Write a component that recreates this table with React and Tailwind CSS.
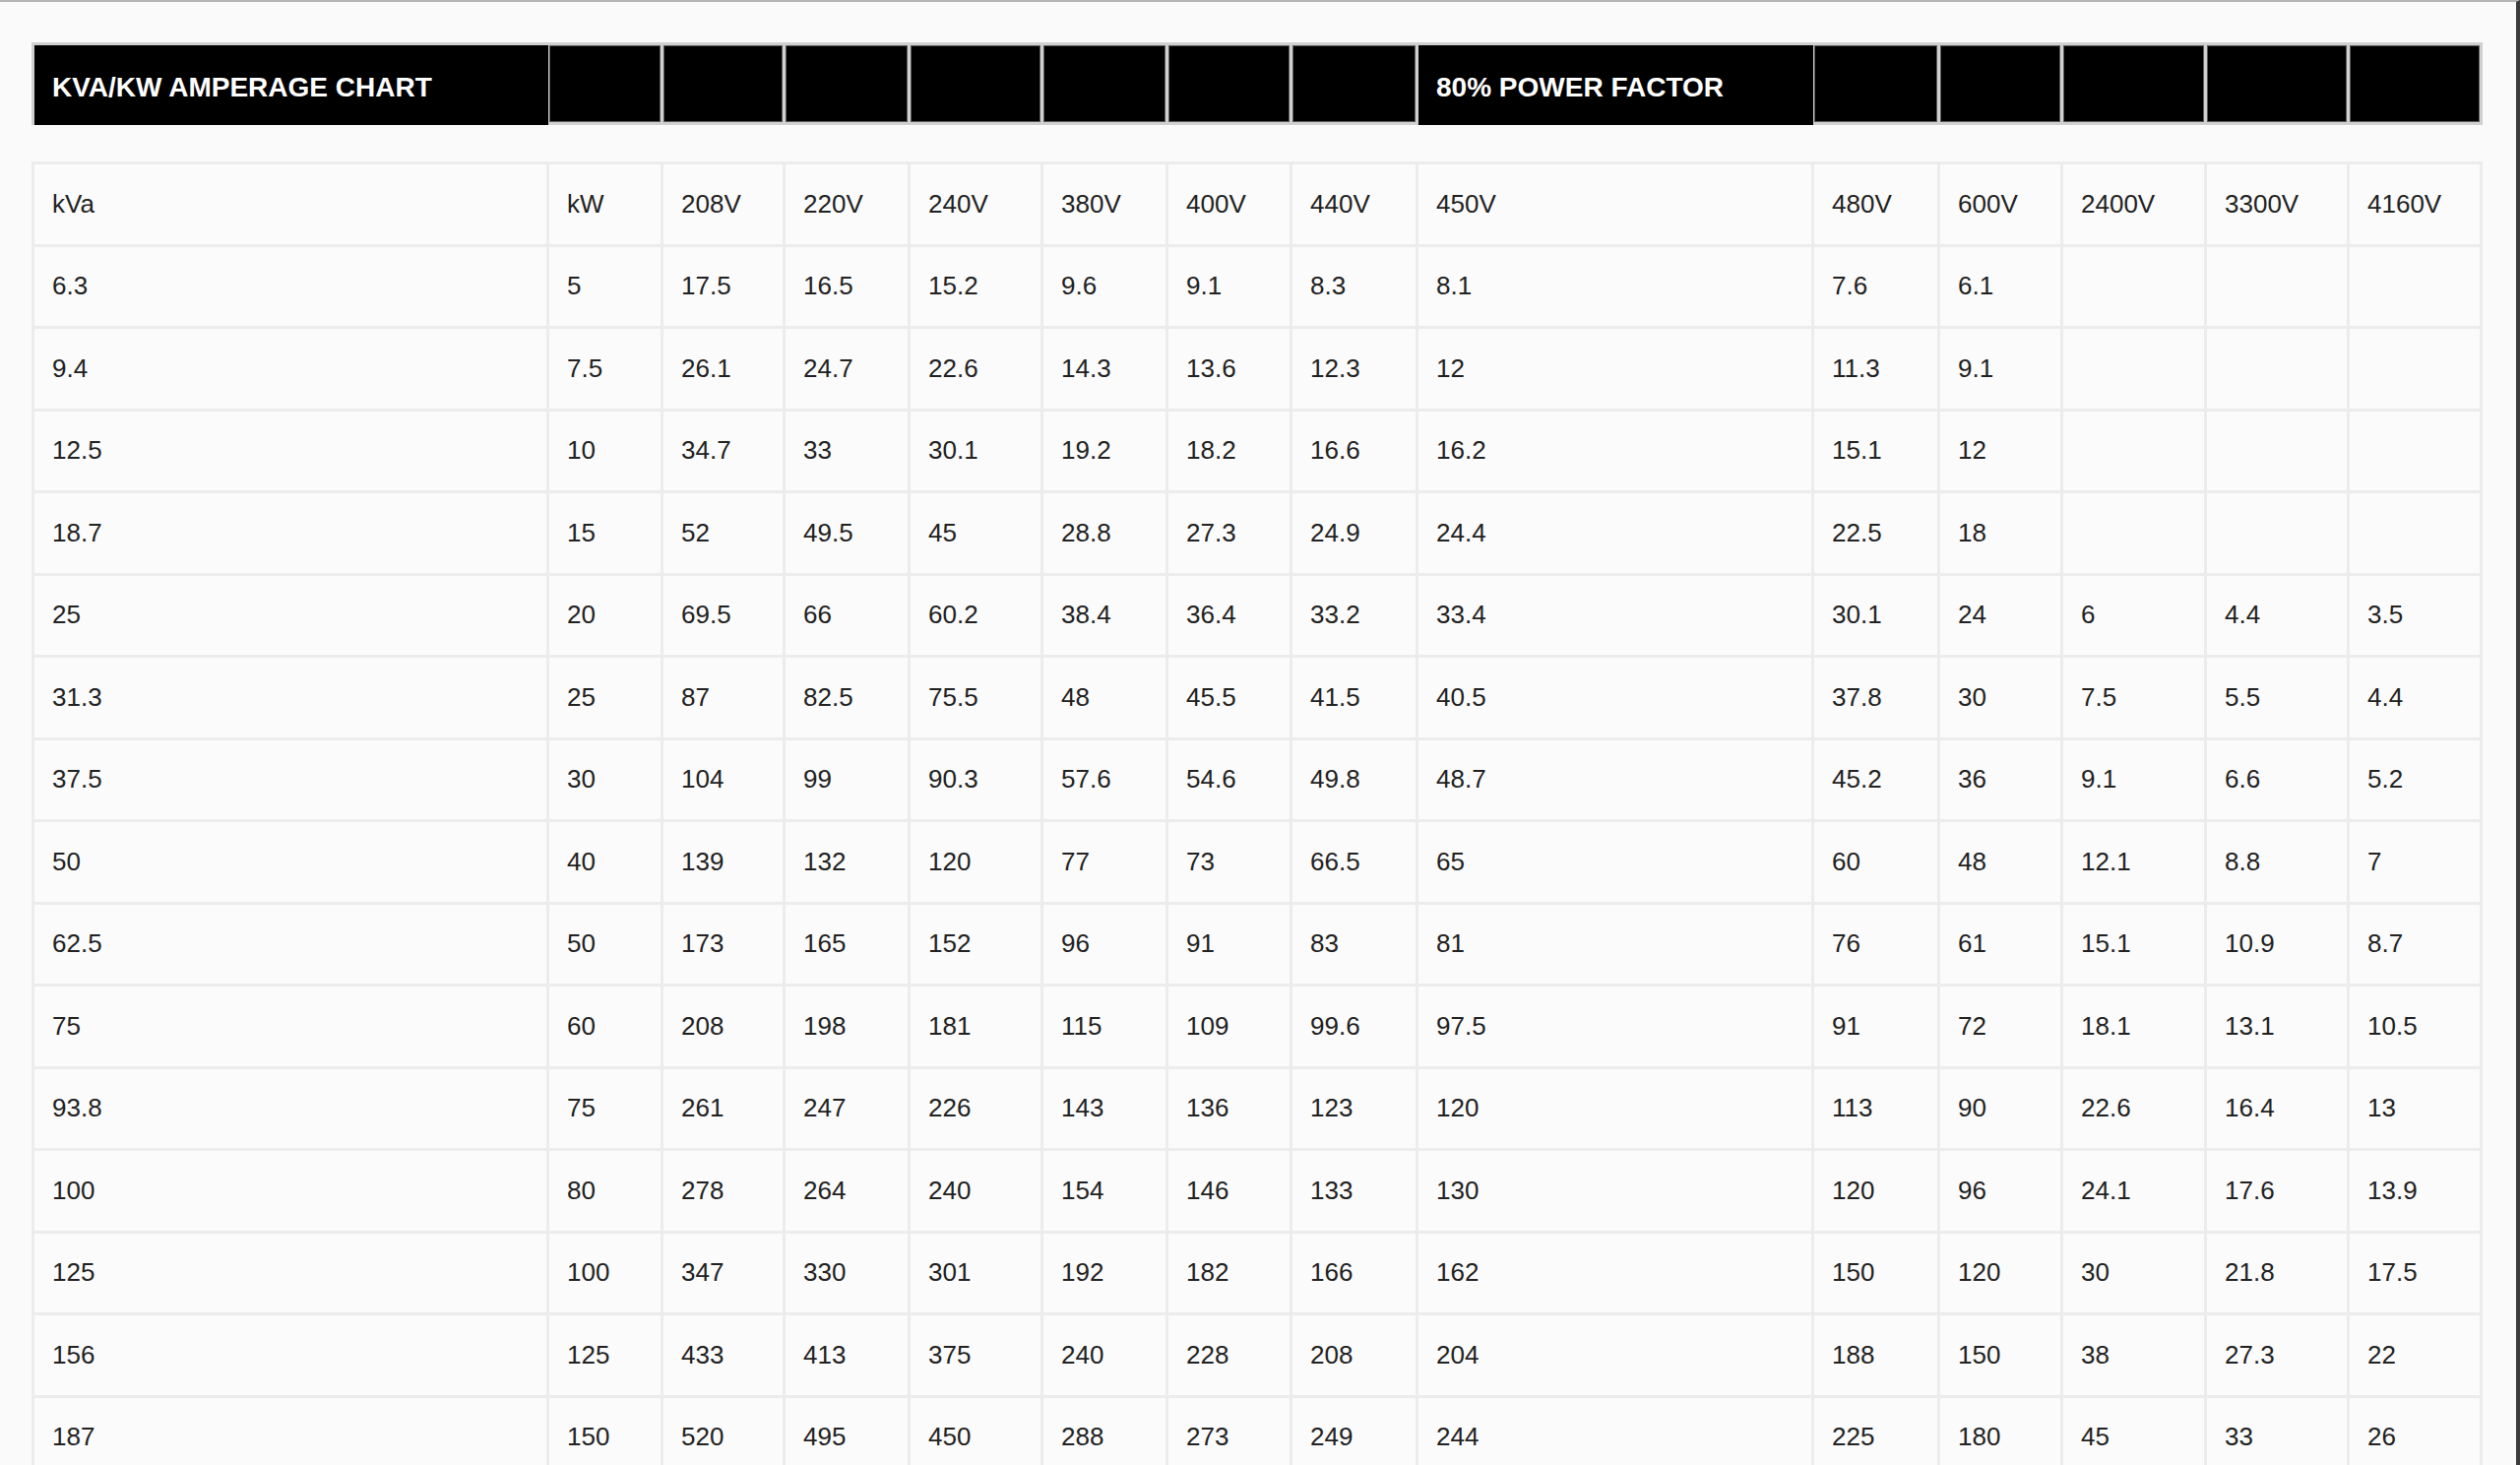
import React from "react";

const HEAD = ["kVa", "kW", "208V", "220V", "240V", "380V", "400V", "440V", "450V", "480V", "600V", "2400V", "3300V", "4160V"];

const ROWS = [
  ["6.3", "5", "17.5", "16.5", "15.2", "9.6", "9.1", "8.3", "8.1", "7.6", "6.1", "", "", ""],
  ["9.4", "7.5", "26.1", "24.7", "22.6", "14.3", "13.6", "12.3", "12", "11.3", "9.1", "", "", ""],
  ["12.5", "10", "34.7", "33", "30.1", "19.2", "18.2", "16.6", "16.2", "15.1", "12", "", "", ""],
  ["18.7", "15", "52", "49.5", "45", "28.8", "27.3", "24.9", "24.4", "22.5", "18", "", "", ""],
  ["25", "20", "69.5", "66", "60.2", "38.4", "36.4", "33.2", "33.4", "30.1", "24", "6", "4.4", "3.5"],
  ["31.3", "25", "87", "82.5", "75.5", "48", "45.5", "41.5", "40.5", "37.8", "30", "7.5", "5.5", "4.4"],
  ["37.5", "30", "104", "99", "90.3", "57.6", "54.6", "49.8", "48.7", "45.2", "36", "9.1", "6.6", "5.2"],
  ["50", "40", "139", "132", "120", "77", "73", "66.5", "65", "60", "48", "12.1", "8.8", "7"],
  ["62.5", "50", "173", "165", "152", "96", "91", "83", "81", "76", "61", "15.1", "10.9", "8.7"],
  ["75", "60", "208", "198", "181", "115", "109", "99.6", "97.5", "91", "72", "18.1", "13.1", "10.5"],
  ["93.8", "75", "261", "247", "226", "143", "136", "123", "120", "113", "90", "22.6", "16.4", "13"],
  ["100", "80", "278", "264", "240", "154", "146", "133", "130", "120", "96", "24.1", "17.6", "13.9"],
  ["125", "100", "347", "330", "301", "192", "182", "166", "162", "150", "120", "30", "21.8", "17.5"],
  ["156", "125", "433", "413", "375", "240", "228", "208", "204", "188", "150", "38", "27.3", "22"],
  ["187", "150", "520", "495", "450", "288", "273", "249", "244", "225", "180", "45", "33", "26"],
];

const COLS =
  "grid-cols-[520px_113px_121px_124px_132px_124px_123px_125px_399px_125px_122px_143px_142px_132px]";

const TITLES = { 0: "KVA/KW AMPERAGE CHART", 8: "80% POWER FACTOR" };

function HeaderBar() {
  return (
    <div className={`grid ${COLS} gap-[3px] p-[3px] w-[2490px] bg-[#d0d0d0]`}>
      {HEAD.map((_, i) =>
        TITLES[i] ? (
          <div
            key={i}
            className="bg-black -mr-[2px] -mb-[3px] h-[81px] flex items-center pl-[18px] pt-[5px] text-white font-bold text-[28px] whitespace-nowrap"
          >
            {TITLES[i]}
          </div>
        ) : (
          <div key={i} className="bg-black border border-[#5c5c5c] h-[78px]" />
        )
      )}
    </div>
  );
}

function DataTable() {
  const all = [HEAD, ...ROWS];
  return (
    <div className={`grid ${COLS} gap-[3px] p-[3px] w-[2490px] bg-[#ececec]`}>
      {all.map((row, r) =>
        row.map((cell, c) => (
          <div
            key={`${r}-${c}`}
            className="bg-[#fbfbfb] h-[80.5px] flex items-center pl-[18px] text-[26px] text-[#222222] whitespace-nowrap"
          >
            {cell}
          </div>
        ))
      )}
    </div>
  );
}

export default function App() {
  return (
    <div
      className="w-full h-[1488px] overflow-hidden bg-[#fafafa] border-t-2 border-t-[#b4b4b4] border-r-4 border-r-[#3c3c3c]"
      style={{ fontFamily: '"Liberation Sans", Arial, sans-serif' }}
    >
      <div className="pl-[32px] pt-[41px] flex flex-col gap-[37px]">
        <HeaderBar />
        <DataTable />
      </div>
    </div>
  );
}
